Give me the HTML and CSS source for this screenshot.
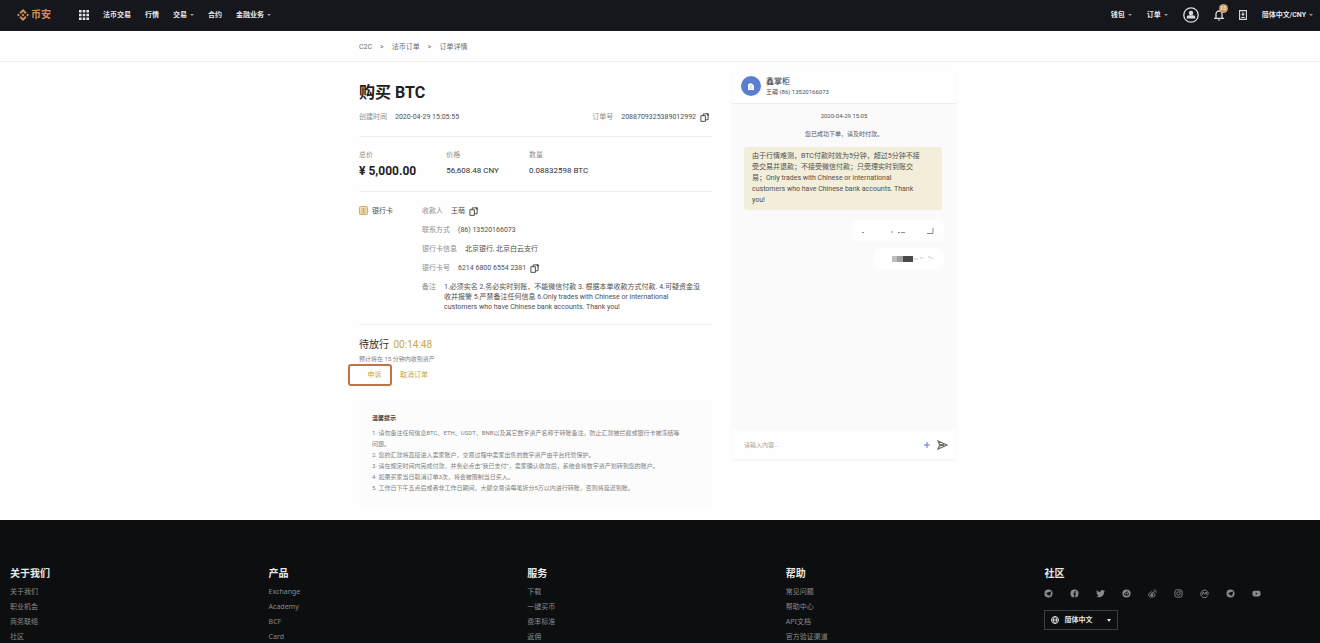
FILE: index.html
```
<!DOCTYPE html>
<html lang="zh-CN">
<head>
  <meta charset="UTF-8">
  <meta name="viewport" content="width=device-width, initial-scale=1.0">
  <title>订单详情</title>
  <link rel="stylesheet" href="styles.css">
</head>
<body>
  <svg class="defs" width="0" height="0" aria-hidden="true">
    <symbol id="copy" viewBox="0 0 10 10">
      <path d="M1 3h5v6.3H1zM3.500 3V1H9v6.500H6.200" fill="none" stroke="currentColor" stroke-width="1"/>
      <path d="M7 .5h2.500V4z" fill="currentColor"/>
    </symbol>
    <symbol id="plane" viewBox="0 0 10 10">
      <circle cx="5" cy="5" r="4.500" fill="currentColor"/>
      <path d="M2 4.800l6-2.300-1.200 5.300-1.600-1.200-1 1-.2-1.700z" fill="#0c0e10"/>
    </symbol>
  </svg>

  <header class="topbar">
    <a class="brand" href="#">
      <svg width="12" height="12" viewBox="0 0 12 12">
        <path d="M6 0l3.600 3.600-1.400 1.400L6 2.800 3.800 5 2.400 3.600zM1.400 4.600L2.800 6 1.400 7.400 0 6zM10.600 4.600L12 6l-1.400 1.400L9.200 6zM6 4.500L7.500 6 6 7.500 4.500 6zM3.800 7L6 9.200 8.200 7l1.400 1.400L6 12 2.400 8.400z" fill="#cf9150"/>
      </svg>
      币安
    </a>
    <a class="apps" href="#" aria-label="应用">
      <svg width="10" height="10" viewBox="0 0 10 10" fill="#e6e6e8">
        <path d="M0 0h2.600v2.600H0zM3.700 0h2.600v2.600H3.700zM7.400 0H10v2.600H7.400zM0 3.700h2.600v2.600H0zM3.700 3.700h2.600v2.600H3.700zM7.400 3.700H10v2.600H7.400zM0 7.400h2.600V10H0zM3.700 7.400h2.600V10H3.700zM7.400 7.400H10V10H7.400z"/>
      </svg>
    </a>
    <nav class="menu">
      <a href="#">法币交易</a>
      <a href="#">行情</a>
      <a class="has-caret" href="#">交易</a>
      <a href="#">合约</a>
      <a class="has-caret" href="#">金融业务</a>
    </nav>
    <nav class="menu menu-right">
      <a class="has-caret" href="#">钱包</a>
      <a class="has-caret" href="#">订单</a>
      <a class="icon" href="#" aria-label="账户">
        <svg width="16" height="16" viewBox="0 0 16 16">
          <circle cx="8" cy="8" r="7.200" fill="none" stroke="#dcdcde" stroke-width="1.300"/>
          <circle cx="8" cy="5.900" r="2.200" fill="#dcdcde"/>
          <path d="M3.800 11.600V10c0-1 1-1.700 2.400-1.700h3.600c1.400 0 2.400.7 2.400 1.700v1.600z" fill="#dcdcde"/>
        </svg>
      </a>
      <a class="icon bell" href="#" aria-label="通知">
        <svg width="10" height="12" viewBox="0 0 10 12">
          <path d="M2 9V5a3 3 0 0 1 6 0v4M0 9.300h10" fill="none" stroke="#dcdcde" stroke-width="1.300"/>
          <path d="M3.500 10.500h3L5 12z" fill="#dcdcde"/>
        </svg>
        <span class="badge">23</span>
      </a>
      <a class="icon" href="#" aria-label="下载">
        <svg width="8" height="10" viewBox="0 0 8 10">
          <path d="M.6.600h6.800v8.800H.6zM4 2.200v4M2.400 4.200h3.200M2.200 7.500h3.600" fill="none" stroke="#dcdcde" stroke-width="1.100"/>
        </svg>
      </a>
      <a class="has-caret" href="#">简体中文/CNY</a>
    </nav>
  </header>

  <nav class="breadcrumb">
    <div class="wrap crumbs">
      <a href="#">C2C</a>
      <span>&gt;</span>
      <a href="#">法币订单</a>
      <span>&gt;</span>
      <a href="#">订单详情</a>
    </div>
  </nav>

  <main class="wrap main">
    <section class="order">
      <h1>购买 BTC</h1>
      <div class="meta">
        <div><span class="label">创建时间</span><span>2020-04-29 15:05:55</span></div>
        <div class="order-no">
          <span class="label">订单号</span><span>2088709325389012992</span>
          <button class="copy" aria-label="复制订单号"><svg width="9" height="9"><use href="#copy"/></svg></button>
        </div>
      </div>

      <dl class="amounts">
        <div><dt>总价</dt><dd class="total">¥ 5,000.00</dd></div>
        <div><dt>价格</dt><dd>56,608.48 CNY</dd></div>
        <div><dt>数量</dt><dd>0.08832598 BTC</dd></div>
      </dl>

      <div class="payment">
        <div class="method">
          <svg width="9" height="9" viewBox="0 0 9 9">
            <rect x=".5" y=".5" width="8" height="8" rx="1" fill="#f3dfb6" stroke="#d3a95c"/>
            <path d="M2 3h5M2 5h5M2 7h5M4.500 2v5" stroke="#d3a95c" stroke-width=".8"/>
          </svg>
          银行卡
        </div>
        <div class="details">
          <div class="row">
            <span class="label">收款人</span><span>王萌</span>
            <button class="copy" aria-label="复制收款人"><svg width="9" height="9"><use href="#copy"/></svg></button>
          </div>
          <div class="row"><span class="label">联系方式</span><span>(86) 13520166073</span></div>
          <div class="row"><span class="label">银行卡信息</span><span>北京银行, 北京白云支行</span></div>
          <div class="row">
            <span class="label">银行卡号</span><span>6214 6800 6554 2381</span>
            <button class="copy" aria-label="复制银行卡号"><svg width="9" height="9"><use href="#copy"/></svg></button>
          </div>
          <div class="row">
            <span class="label">备注</span>
            <span>1.必须实名 2.务必实时到账，不能微信付款 3. 根据本单收款方式付款. 4.可疑资金没<br>收并报警 5.严禁备注任何信息 6.Only trades with Chinese or international<br>customers who have Chinese bank accounts. Thank you!</span>
          </div>
        </div>
      </div>

      <div class="status">
        <h2>待放行 <span class="timer">00:14:48</span></h2>
        <p>预计将在 15 分钟内收到资产</p>
        <div class="actions">
          <button class="appeal">申诉</button>
          <button class="cancel">取消订单</button>
        </div>
      </div>

      <div class="tips">
        <h3>温馨提示</h3>
        <p>1. 请勿备注任何信息BTC、ETH、USDT、BNB以及其它数字资产名称于转账备注，防止汇款被拦截或银行卡被冻结等<br>问题。</p>
        <p>2. 您的汇款将直接进入卖家账户，交易过程中卖家出售的数字资产由平台托管保护。</p>
        <p>3. 请在规定时间内完成付款，并务必点击“我已支付”，卖家确认收款后，系统会将数字资产划转到您的账户。</p>
        <p>4. 如果买家当日取消订单3次，将会被限制当日买入。</p>
        <p>5. 工作日下午五点后或者非工作日期间，大额交易请每笔拆分5万以内进行转账，否则将延迟到账。</p>
      </div>
    </section>

    <section class="chat">
      <div class="chat-head">
        <div class="avatar">
          <svg width="8" height="9" viewBox="0 0 8 9">
            <path d="M1 8V2.500L3.500 1 6 2.500l1 1V8z" fill="#fff"/>
            <path d="M2.500 4h3M2.500 6h3" stroke="#a9bbe8" stroke-width=".8"/>
          </svg>
        </div>
        <div class="chat-user">
          <div class="chat-name">鑫掌柜</div>
          <div class="chat-sub">王萌 (86) 13520166073</div>
        </div>
      </div>
      <div class="chat-body">
        <div class="chat-time">2020-04-29 15:05</div>
        <div class="chat-system">您已成功下单，请及时付款。</div>
        <div class="message">由于行情难测，BTC付款时效为5分钟，超过5分钟不接<br>受交易并退款；不接受微信付款；只受理实时到账交<br>易；Only trades with Chinese or international<br>customers who have Chinese bank accounts. Thank<br>you!</div>
        <div class="reply">
          <svg width="76" height="10" viewBox="0 0 76 10" fill="none" stroke="#8c8c8c">
            <path d="M2 6.500h2M31 6h2M38 6.500h2M41 6.500h4M73 2v5.500h-6"/>
          </svg>
        </div>
        <div class="reply">
          <svg width="54" height="10" viewBox="0 0 54 10">
            <path d="M10 2h5v6h-5z" fill="#bdbdbd"/><path d="M15 2h6v6h-6z" fill="#a0a0a0"/><path d="M21 2h10v6H21z" fill="#4a4a4a"/>
            <path d="M31 5h5M38 4h3M46 3h2l3 2" stroke="#c9c9c9" fill="none"/>
          </svg>
        </div>
      </div>
      <form class="chat-form">
        <input type="text" aria-label="消息" placeholder="请输入内容...">
        <button type="button" aria-label="添加附件">
          <svg width="8" height="8" viewBox="0 0 8 8"><path d="M4 1v6M1 4h6" stroke="#6872c4"/></svg>
        </button>
        <button type="button" aria-label="发送">
          <svg width="11" height="10" viewBox="0 0 11 10"><path d="M1 1l9 4-9 4 1.500-3.500L7 5 2.500 4.300z" fill="#fff" stroke="#6c6c6c" stroke-width="1.300"/></svg>
        </button>
      </form>
    </section>
  </main>

  <footer class="footer">
    <div class="col">
      <h4>关于我们</h4>
      <a href="#">关于我们</a>
      <a href="#">职业机会</a>
      <a href="#">商务联络</a>
      <a href="#">社区</a>
    </div>
    <div class="col">
      <h4>产品</h4>
      <a href="#">Exchange</a>
      <a href="#">Academy</a>
      <a href="#">BCF</a>
      <a href="#">Card</a>
    </div>
    <div class="col">
      <h4>服务</h4>
      <a href="#">下载</a>
      <a href="#">一键买币</a>
      <a href="#">费率标准</a>
      <a href="#">返佣</a>
    </div>
    <div class="col">
      <h4>帮助</h4>
      <a href="#">常见问题</a>
      <a href="#">帮助中心</a>
      <a href="#">API文档</a>
      <a href="#">官方验证渠道</a>
    </div>
    <div class="col">
      <h4>社区</h4>
      <div class="social">
        <a href="#" aria-label="Telegram"><svg width="9" height="9"><use href="#plane"/></svg></a>
        <a href="#" aria-label="Facebook"><svg width="9" height="9" viewBox="0 0 10 10"><circle cx="5" cy="5" r="4.500" fill="currentColor"/><path d="M5.200 10V4.300c0-1 .5-1.500 1.600-1.500M3.700 5.600h3" stroke="#0c0e10" stroke-width="1.200" fill="none"/></svg></a>
        <a href="#" aria-label="Twitter"><svg width="9" height="9" viewBox="0 0 10 10"><path d="M.8 1.500C2 2.800 3.300 3.400 4.900 3.500 4.600 1.200 7 .3 8.200 1.700l1.500-.5-.8 1.400.9-.1-.9 1C8.800 8.300 4 10.300.3 8.300c1.200 0 2-.2 2.700-.8-1-.2-1.500-.7-1.800-1.400h.9C1 5.600.6 4.900.6 3.900l.8.300C.5 3.400.3 2.500.8 1.500z" fill="currentColor"/></svg></a>
        <a href="#" aria-label="Reddit"><svg width="9" height="9" viewBox="0 0 10 10"><circle cx="5" cy="5" r="4.500" fill="currentColor"/><ellipse cx="5" cy="5.600" rx="2.900" ry="2" fill="#0c0e10"/><circle cx="3.900" cy="5.300" r=".9" fill="currentColor"/><circle cx="6.100" cy="5.300" r=".9" fill="currentColor"/><path d="M5 3.700l.5-1.500 1.300.3" stroke="#0c0e10" stroke-width=".6" fill="none"/></svg></a>
        <a href="#" aria-label="微博"><svg width="9" height="9" viewBox="0 0 10 10" fill="none" stroke="currentColor"><path d="M4 3.200c-2 .6-3.400 2-3.400 3.400C.6 8 2.200 9 4.200 9S8 7.900 8 6.600c0-.8-.6-1.200-1.300-1.400.2-.9-.4-1.300-1.700-.7.200-1-.1-1.400-1-1.300z"/><circle cx="4.200" cy="6.600" r="1.200" fill="currentColor"/><path d="M6.300 1C8.300.7 9.500 2 9.200 4M6.500 2.500c.9-.1 1.400.4 1.300 1.300" stroke-width=".8"/></svg></a>
        <a href="#" aria-label="Instagram"><svg width="9" height="9" viewBox="0 0 10 10" fill="none" stroke="currentColor"><rect x="1" y="1" width="8" height="8" rx="2"/><circle cx="5" cy="5" r="1.900"/><circle cx="7.300" cy="2.700" r=".3"/></svg></a>
        <a href="#" aria-label="CoinMarketCap"><svg width="9" height="9" viewBox="0 0 10 10" fill="none" stroke="currentColor"><path d="M8.200 8.200A4.200 4.200 0 1 1 9.200 5c0 1.800-1.800 1.600-1.800.5L7 3.300 5.200 6 3.500 3.300 2.600 6.500"/></svg></a>
        <a href="#" aria-label="Telegram 公告"><svg width="9" height="9"><use href="#plane"/></svg></a>
        <a href="#" aria-label="YouTube"><svg width="9" height="9" viewBox="0 0 10 10"><rect x=".5" y="2" width="9" height="6.200" rx="2" fill="currentColor"/><path d="M4.200 3.800v2.500l2-1.200z" fill="#0c0e10"/></svg></a>
      </div>
      <label class="lang">
        <svg width="8" height="8" viewBox="0 0 8 8" fill="none" stroke="#e4e4e4" stroke-width=".9"><circle cx="4" cy="4" r="3.500"/><ellipse cx="4" cy="4" rx="1.500" ry="3.500"/><path d="M.5 4h7"/></svg>
        <select aria-label="语言">
          <option>简体中文</option>
          <option>English</option>
        </select>
        <svg width="4" height="3" viewBox="0 0 4 3"><path d="M0 0h4L2 3z" fill="#e4e4e4"/></svg>
      </label>
    </div>
  </footer>
</body>
</html>
```

FILE: styles.css
```
* {
  box-sizing: border-box;
  margin: 0;
  padding: 0;
}
body {
  display: flex;
  flex-direction: column;
  height: 100vh;
  overflow: hidden;
  background: #fefefe;
  font-family: Roboto, "Noto Sans CJK SC", sans-serif;
  font-size: 7px;
  line-height: 10px;
  color: #505050;
}
a {
  color: inherit;
  text-decoration: none;
}
button {
  border: none;
  background: none;
  font: inherit;
  color: inherit;
  cursor: pointer;
}
svg {
  display: block;
  flex: none;
}
.defs {
  position: absolute;
}
.wrap {
  width: 100%;
  max-width: 602px;
  margin: 0 auto;
}

/* top bar */
.topbar {
  display: flex;
  flex: none;
  align-items: center;
  height: 31px;
  padding: 0 7px 2px 17px;
  background: #15171c;
  color: #e6e6e8;
  font-weight: 700;
}
.brand {
  display: flex;
  align-items: center;
  gap: 2px;
  color: #cf8a50;
  font-size: 10px;
}
.apps {
  margin: 0 14px 0 28px;
}
.menu {
  display: flex;
  align-items: center;
  gap: 14px;
}
.menu a {
  display: flex;
  align-items: center;
}
.menu-right {
  gap: 15px;
  margin-left: auto;
}
.has-caret::after {
  content: "";
  margin-left: 3px;
  border: 2px solid transparent;
  border-top-color: #9a9a9e;
  border-bottom: none;
}
.bell {
  position: relative;
}
.badge {
  position: absolute;
  top: -5px;
  right: -4px;
  width: 9px;
  height: 9px;
  border-radius: 50%;
  background: #c99a66;
  color: #f4e4d0;
  font-size: 5px;
  line-height: 9px;
  text-align: center;
}

/* breadcrumb */
.breadcrumb {
  flex: none;
  border-bottom: 1px solid #efefef;
}
.crumbs {
  display: flex;
  gap: 8px;
  padding: 11px 0 9px;
  color: #6b6b6b;
}

/* order */
.main {
  display: flex;
  flex: none;
  align-items: flex-start;
  gap: 20px;
  padding-bottom: 14px;
}
.order {
  width: 353px;
  padding-top: 20px;
}
h1 {
  font-size: 16px;
  line-height: 22px;
  font-weight: 700;
  color: #1f1f1f;
}
.label,
dt {
  color: #8f8f8f;
}
.label {
  flex: none;
  margin-right: 8px;
}
.meta {
  display: flex;
  justify-content: space-between;
  padding: 8px 0 14px;
  border-bottom: 1px solid #efefef;
}
.order-no,
.row {
  display: flex;
}
.order-no {
  padding-right: 3px;
}
.copy {
  margin-left: 4px;
  color: #3c3c3c;
}
.amounts {
  display: flex;
  gap: 30px;
  padding: 13px 0;
  border-bottom: 1px solid #efefef;
}
dd {
  margin-top: 4px;
  font-size: 8px;
  line-height: 14px;
  color: #303030;
}
.total {
  font-size: 12px;
  font-weight: 700;
  color: #1f1f1f;
}
.payment {
  display: flex;
  padding: 14px 0 12px;
  border-bottom: 1px solid #efefef;
}
.method {
  display: flex;
  gap: 4px;
  width: 63px;
}
.details {
  display: flex;
  flex: 1;
  flex-direction: column;
  gap: 9px;
}
.status {
  padding-top: 12px;
}
h2 {
  font-size: 10px;
  line-height: 16px;
  font-weight: 400;
  color: #303030;
}
.timer {
  margin-left: 2px;
  color: #c4a84a;
}
.status p {
  margin-top: 1px;
  color: #808080;
  font-size: 6px;
}
.actions {
  display: flex;
  gap: 8px;
  margin-left: -11px;
  color: #c4a84a;
}
.appeal {
  width: 44px;
  height: 22px;
  padding-left: 9px;
  border: 2px solid #bd7448;
  border-radius: 3px;
}
.tips {
  margin-top: 14px;
  padding: 13px;
  background: #fcfcfc;
  color: #808080;
  font-size: 6px;
  line-height: 11px;
}
h3 {
  margin-bottom: 4px;
  font-size: 6px;
  line-height: 10px;
  color: #404040;
}

/* chat */
.chat {
  width: 224px;
  margin-top: 10px;
  box-shadow: 0 1px 2px rgba(0, 0, 0, 0.06);
}
.chat-head {
  display: flex;
  align-items: center;
  gap: 5px;
  height: 32px;
  padding: 0 9px 3px;
  border-bottom: 1px solid #ececec;
  background: #fefefe;
}
.avatar {
  display: flex;
  align-items: center;
  justify-content: center;
  width: 20px;
  height: 20px;
  border-radius: 50%;
  background: #5b7fd0;
}
.chat-user {
  padding-top: 2px;
}
.chat-name {
  font-size: 8px;
  color: #303030;
}
.chat-sub {
  font-size: 6px;
}
.chat-body {
  height: 326px;
  padding: 7px 12px;
  background: #fafafa;
}
.chat-time,
.chat-system {
  text-align: center;
  font-size: 6px;
}
.chat-system {
  margin: 8px 0;
}
.message {
  margin-right: 2px;
  padding: 4px 8px;
  border-radius: 3px;
  background: #f2eed9;
  line-height: 11px;
}
.reply {
  width: fit-content;
  margin: 10px 0 0 auto;
  padding: 6px 8px;
  border-radius: 6px;
  background: #fefefe;
}
.reply + .reply {
  margin-top: 6px;
}
.chat-form {
  display: flex;
  align-items: center;
  gap: 6px;
  height: 29px;
  padding: 0 8px 0 12px;
  background: #fefefe;
}
.chat-form input {
  flex: 1;
  min-width: 0;
  border: none;
  outline: none;
  background: none;
  font: inherit;
  font-size: 6px;
}
.chat-form input::placeholder {
  color: #a0a0a0;
}

/* footer */
.footer {
  display: grid;
  flex: 1;
  grid-template-columns: repeat(5, 1fr);
  min-height: 0;
  padding: 46px 17px 0 10px;
  overflow: hidden;
  background: #0c0e10;
  color: #8a8a8a;
  font-family: "Noto Sans", "Noto Sans CJK SC", sans-serif;
}
.col > a {
  display: block;
  margin-bottom: 5px;
}
h4 {
  margin-bottom: 6px;
  font-size: 10px;
  line-height: 15px;
  color: #e8e8e8;
}
.social {
  display: flex;
  gap: 17px;
  align-items: center;
  height: 12px;
}
.lang {
  display: flex;
  align-items: center;
  gap: 5px;
  width: 74px;
  height: 20px;
  margin-top: 11px;
  padding: 0 6px;
  border: 1px solid #3c3e40;
}
.lang select {
  flex: 1;
  min-width: 0;
  border: none;
  background: none;
  appearance: none;
  color: #e8e8e8;
  font: inherit;
  font-weight: 700;
}
```
